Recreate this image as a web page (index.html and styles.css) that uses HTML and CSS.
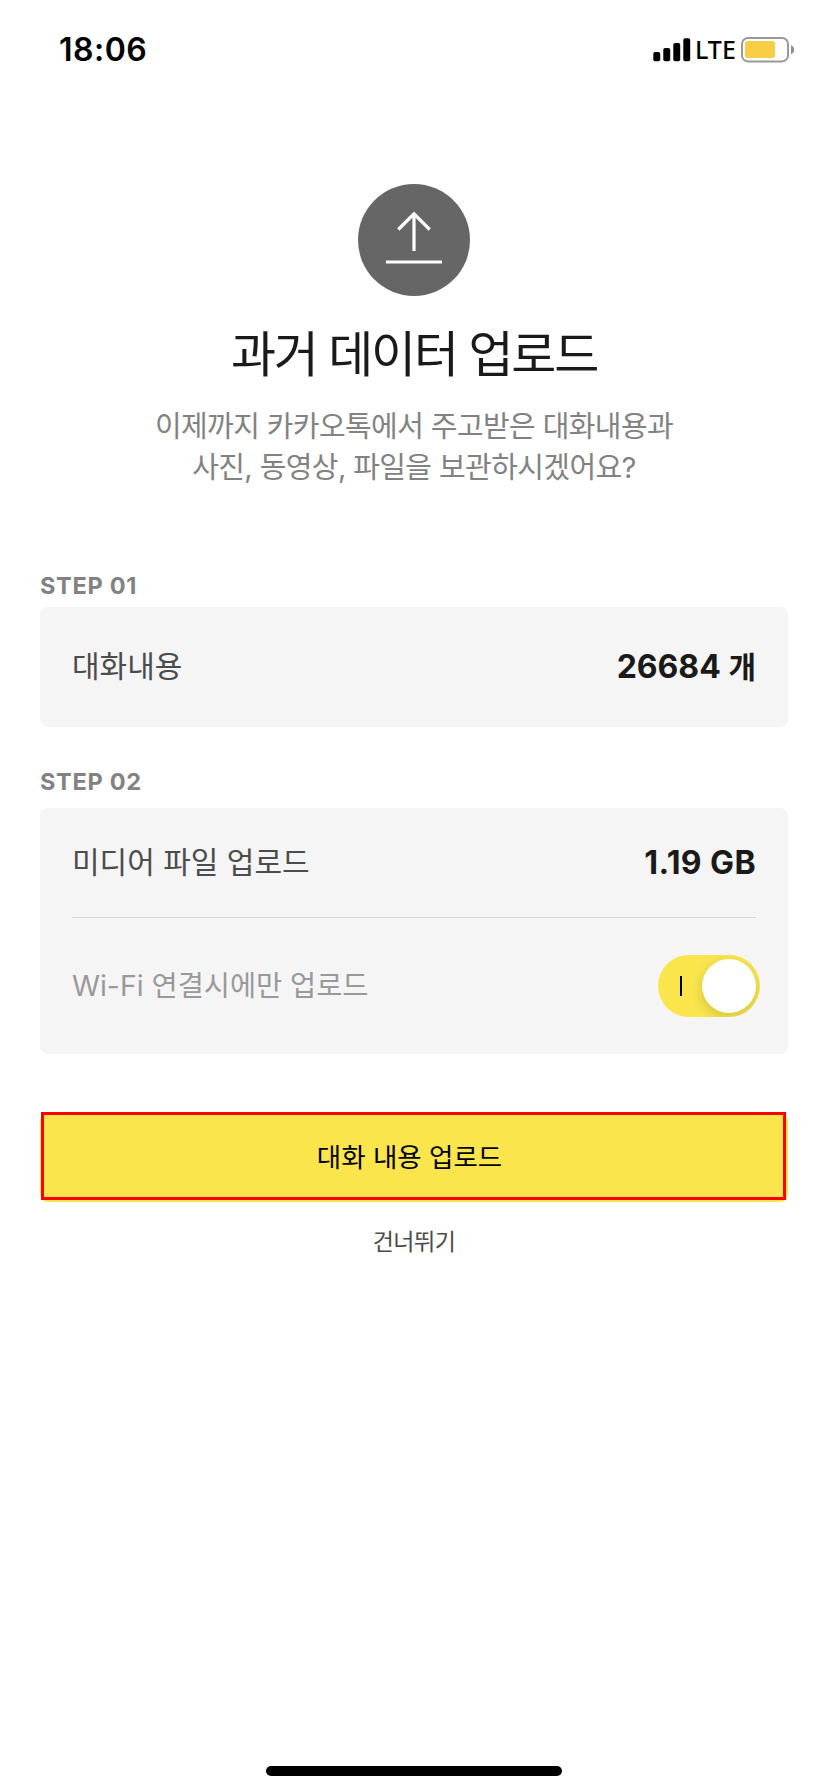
FILE: index.html
```html
<!DOCTYPE html>
<html lang="ko">
<head>
<meta charset="utf-8">
<title>과거 데이터 업로드</title>
<link rel="stylesheet" href="styles.css">
</head>
<body>
<div class="screen">
  <header class="status-bar">
    <span class="time">18:06</span>
    <div class="indicators">
      <svg class="signal" width="38" height="24" viewBox="0 0 38 24">
        <rect x="0.3" y="14" width="6.9" height="9.3" rx="1.8"/>
        <rect x="10.3" y="10" width="6.9" height="13.3" rx="1.8"/>
        <rect x="20.3" y="5" width="6.9" height="18.3" rx="1.8"/>
        <rect x="30.3" y="0.3" width="6.9" height="23" rx="1.8"/>
      </svg>
      <span class="network">LTE</span>
      <svg class="battery" width="54" height="26" viewBox="0 0 54 26">
        <rect x="1" y="1" width="46" height="23.4" rx="6" fill="none" stroke="#999" stroke-width="2"/>
        <rect x="4" y="4" width="30" height="17" rx="2.5" fill="#f7ce46"/>
        <path d="M50 8.3c2 .7 3.2 2.300 3.200 4.400s-1.200 3.700-3.200 4.400z" fill="#8e8e8e"/>
      </svg>
    </div>
  </header>

  <main class="content">
    <section class="intro">
      <svg class="upload-icon" width="112" height="112" viewBox="0 0 112 112">
        <circle cx="56" cy="56" r="56" fill="#666"/>
        <path d="M56 67V30M40.300 45.500L56 29.800l15.700 15.700M28 78h56" fill="none" stroke="#fff" stroke-width="3.200"/>
      </svg>
      <h1 class="title">과거 데이터 업로드</h1>
      <p class="description">이제까지 카카오톡에서 주고받은 대화내용과<br>사진, 동영상, 파일을 보관하시겠어요?</p>
    </section>

    <h2 class="step">STEP 01</h2>
    <section class="card card-chat">
      <div class="row">
        <span class="label">대화내용</span>
        <strong class="value">26684 <span class="unit">개</span></strong>
      </div>
    </section>

    <h2 class="step step-second">STEP 02</h2>
    <section class="card card-media">
      <div class="row row-media">
        <span class="label">미디어 파일 업로드</span>
        <strong class="value value-size">1.19 GB</strong>
      </div>
      <div class="row row-wifi">
        <span class="label-muted">Wi-Fi 연결시에만 업로드</span>
        <div class="toggle" role="switch" aria-checked="true">
          <span class="toggle-mark"></span>
          <span class="toggle-knob"></span>
        </div>
      </div>
    </section>

    <button class="upload-button">대화 내용 업로드</button>
    <a class="skip">건너뛰기</a>
  </main>
  <div class="home-indicator"></div>
</div>
</body>
</html>
```

FILE: styles.css
```css
* { box-sizing: border-box; }

body {
  margin: 0;
  background: #fff;
  font-family: Inter, "Noto Sans CJK KR", sans-serif;
  color: #1a1a1a;
}

h1, h2, p { margin: 0; font-weight: 400; }

.screen {
  width: 828px;
  height: 1792px;
  display: flex;
  flex-direction: column;
  overflow: hidden;
}

.status-bar {
  height: 100px;
  padding: 30px 33px 30px 59px;
  display: flex;
  justify-content: space-between;
  color: #000;
}

.time {
  font-size: 32px;
  font-weight: 600;
  line-height: 40px;
  letter-spacing: 0.5px;
}

.indicators { display: flex; align-items: flex-start; }
.signal { margin-top: 8px; }

.network {
  width: 50px;
  padding-left: 4px;
  font: 500 25px/38px "Noto Sans", sans-serif;
}

.battery { margin-top: 7px; }

.content {
  flex: 1;
  padding: 84px 40px 0;
  display: flex;
  flex-direction: column;
}

.intro {
  display: flex;
  flex-direction: column;
  align-items: center;
  text-align: center;
}

.title {
  margin-top: 24px;
  font-size: 49px;
  line-height: 70px;
  letter-spacing: -2.2px;
}

.description {
  margin-top: 16px;
  font-size: 29px;
  line-height: 41px;
  letter-spacing: -0.6px;
  color: #828282;
}

.step {
  margin-top: 83px;
  font-size: 23.5px;
  font-weight: 700;
  line-height: 30px;
  letter-spacing: 0.7px;
  color: #828282;
}

.step-second { margin-top: 40px; }

.card {
  border-radius: 8px;
  background: #f5f5f5;
  padding: 0 32px;
}

.card-chat { height: 120px; margin-top: 6px; }
.card-media { height: 246px; margin-top: 11px; }

.row {
  height: 120px;
  display: flex;
  align-items: center;
  justify-content: space-between;
}

.row-media { height: 110px; border-bottom: 1px solid #d6d6d6; }
.row-wifi { height: 136px; margin-right: -4px; }

.label { padding-bottom: 6px; font-size: 30px; color: #4c4c4c; }
.label-muted { padding-bottom: 5px; font-size: 28.4px; color: #999; }
.value { font-size: 32px; font-weight: 700; line-height: 40px; }
.value-size { letter-spacing: 0.4px; }
.unit { font-size: 30px; line-height: 1; }

.toggle {
  width: 102px;
  height: 62px;
  padding: 0 4px 0 22px;
  border-radius: 31px;
  background: #fae64c;
  display: flex;
  align-items: center;
  justify-content: space-between;
  overflow: hidden;
}

.toggle-mark { width: 2px; height: 20px; background: #000; }

.toggle-knob {
  width: 54px;
  height: 54px;
  border-radius: 50%;
  background: #fff;
  box-shadow: 0 4px 14px rgba(0, 0, 0, 0.16);
}

.upload-button {
  position: relative;
  height: 88px;
  margin-top: 60px;
  padding: 0 9px 5px 0;
  border: 0;
  border-radius: 8px;
  background: #fae64c;
  font: 26.5px "Noto Sans CJK KR", sans-serif;
  color: #000;
}

/* highlight frame over the button */
.upload-button::after {
  content: "";
  position: absolute;
  inset: -2px 2px 2px 1px;
  border: 3px solid #f00;
}

.skip {
  margin-top: 23px;
  align-self: center;
  font-size: 23px;
  line-height: 34px;
  letter-spacing: -0.5px;
  color: #4c4c4c;
}

.home-indicator {
  width: 296px;
  height: 10px;
  margin: 0 auto 16px;
  border-radius: 5px;
  background: #000;
}
```
